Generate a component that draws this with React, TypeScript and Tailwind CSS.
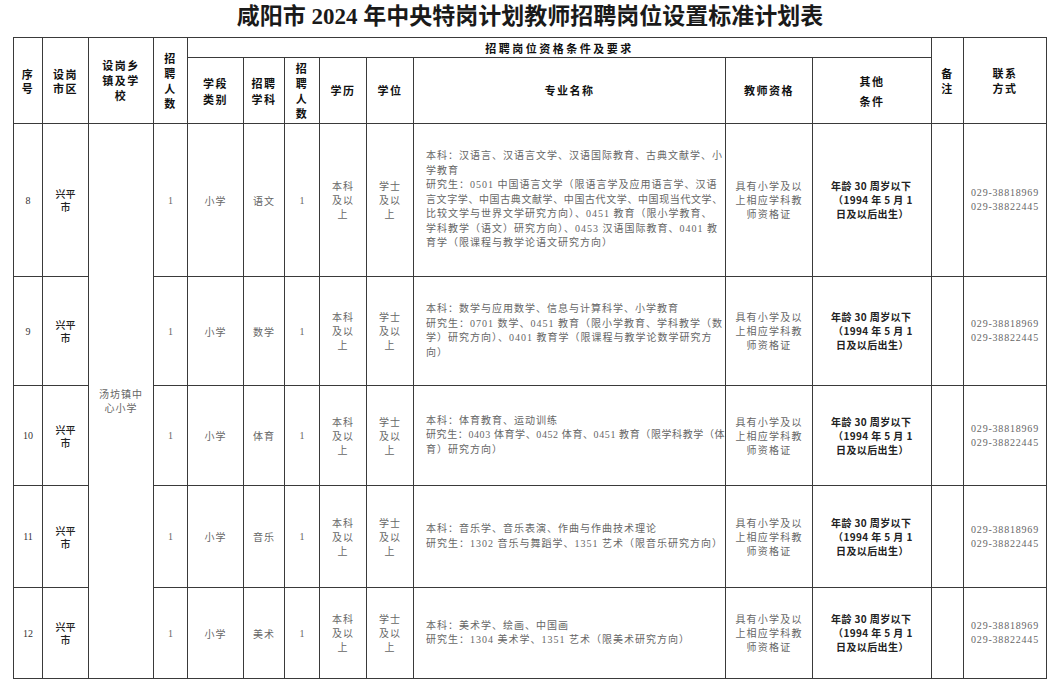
import React from 'react';

const cols = [29, 46, 65, 34, 56, 41, 35, 47, 47, 312, 87, 119, 32, 83];

type Row = {
  no: string;
  subject: string;
  height: number;
  major: { text: string; tight?: boolean }[];
};

const rows: Row[] = [
  {
    no: '8',
    subject: '语文',
    height: 153,
    major: [
      { text: '本科：汉语言、汉语言文学、汉语国际教育、古典文献学、小' },
      { text: '学教育' },
      { text: '研究生：0501 中国语言文学（限语言学及应用语言学、汉语' },
      { text: '言文字学、中国古典文献学、中国古代文学、中国现当代文学、', tight: true },
      { text: '比较文学与世界文学研究方向）、0451 教育（限小学教育、' },
      { text: '学科教学（语文）研究方向）、0453 汉语国际教育、0401 教' },
      { text: '育学（限课程与教学论语文研究方向）' },
    ],
  },
  {
    no: '9',
    subject: '数学',
    height: 109,
    major: [
      { text: '本科：数学与应用数学、信息与计算科学、小学教育' },
      { text: '研究生：0701 数学、0451 教育（限小学教育、学科教学（数' },
      { text: '学）研究方向）、0401 教育学（限课程与教学论数学研究方' },
      { text: '向）' },
    ],
  },
  {
    no: '10',
    subject: '体育',
    height: 100,
    major: [
      { text: '本科：体育教育、运动训练' },
      { text: '研究生：0403 体育学、0452 体育、0451 教育（限学科教学（体', tight: true },
      { text: '育）研究方向）' },
    ],
  },
  {
    no: '11',
    subject: '音乐',
    height: 102,
    major: [
      { text: '本科：音乐学、音乐表演、作曲与作曲技术理论' },
      { text: '研究生：1302 音乐与舞蹈学、1351 艺术（限音乐研究方向）' },
    ],
  },
  {
    no: '12',
    subject: '美术',
    height: 91,
    major: [
      { text: '本科：美术学、绘画、中国画' },
      { text: '研究生：1304 美术学、1351 艺术（限美术研究方向）' },
    ],
  },
];

const serif = { fontFamily: '"Liberation Serif", "Noto Sans CJK SC", serif' };

function Stack({ lines, className = '' }: { lines: string[]; className?: string }) {
  return (
    <div className={className}>
      {lines.map((l, i) => (
        <div key={i}>{l}</div>
      ))}
    </div>
  );
}

const cell = 'border border-[#3a3a3a] p-0 text-center align-middle';
const head = `${cell} text-[11px] font-bold text-[#111] tracking-[1.5px]`;

export default function App() {
  return (
    <div className="h-[689px] w-[1060px] bg-white" style={{ fontFamily: '"Noto Sans CJK SC", sans-serif' }}>
      <div
        className="flex h-[37px] items-center justify-center pb-[2px] text-[23px] font-semibold text-[#1a1a1a]"
        style={serif}
      >
        咸阳市 2024 年中央特岗计划教师招聘岗位设置标准计划表
      </div>

      <table className="ml-[13px] w-[1033px] table-fixed border-collapse">
        <colgroup>
          {cols.map((w, i) => (
            <col key={i} style={{ width: w }} />
          ))}
        </colgroup>
        <thead>
          <tr className="h-[20px]">
            <th rowSpan={2} className={`${head} leading-[14px]`}>
              <Stack lines={['序', '号']} />
            </th>
            <th rowSpan={2} className={`${head} leading-[14px]`}>
              <Stack lines={['设岗', '市区']} />
            </th>
            <th rowSpan={2} className={`${head} leading-[15px]`}>
              <Stack lines={['设岗乡', '镇及学', '校']} />
            </th>
            <th rowSpan={2} className={`${head} leading-[15px]`}>
              <Stack lines={['招', '聘', '人', '数']} />
            </th>
            <th colSpan={8} className={`${head} leading-[14px] tracking-[2.5px]`}>
              招聘岗位资格条件及要求
            </th>
            <th rowSpan={2} className={`${head} leading-[15px]`}>
              <Stack lines={['备', '注']} />
            </th>
            <th rowSpan={2} className={`${head} leading-[15px]`}>
              <Stack lines={['联系', '方式']} />
            </th>
          </tr>
          <tr className="h-[66px]">
            <th className={`${head} leading-[16px]`}>
              <Stack lines={['学段', '类别']} />
            </th>
            <th className={`${head} leading-[16px]`}>
              <Stack lines={['招聘', '学科']} />
            </th>
            <th className={`${head} leading-[15px]`}>
              <Stack lines={['招', '聘', '人', '数']} />
            </th>
            <th className={head}>学历</th>
            <th className={head}>学位</th>
            <th className={head}>专业名称</th>
            <th className={head}>教师资格</th>
            <th className={`${head} leading-[20px]`}>
              <Stack lines={['其他', '条件']} />
            </th>
          </tr>
        </thead>
        <tbody className="text-[10px] text-[#666]">
          {rows.map((r, idx) => (
            <tr key={r.no} style={{ height: r.height }}>
              <td className={`${cell} text-[#333]`} style={serif}>
                {r.no}
              </td>
              <td className={`${cell} font-medium leading-[13px] text-[#222]`}>
                <Stack lines={['兴平', '市']} />
              </td>
              {idx === 0 && (
                <td rowSpan={5} className={`${cell} leading-[14px] tracking-[1px]`}>
                  <Stack lines={['汤坊镇中', '心小学']} />
                </td>
              )}
              <td className={cell} style={serif}>
                1
              </td>
              <td className={`${cell} tracking-[1px]`}>小学</td>
              <td className={`${cell} tracking-[1px]`}>{r.subject}</td>
              <td className={cell} style={serif}>
                1
              </td>
              <td className={`${cell} leading-[14px] tracking-[1px]`}>
                <Stack lines={['本科', '及以', '上']} />
              </td>
              <td className={`${cell} leading-[14px] tracking-[1px]`}>
                <Stack lines={['学士', '及以', '上']} />
              </td>
              <td className={`${cell} pl-[12px] text-left leading-[14.5px]`} style={serif}>
                {r.major.map((m, i) => (
                  <div
                    key={i}
                    className={`whitespace-nowrap ${m.tight ? 'tracking-[0.6px]' : 'tracking-[1px]'}`}
                  >
                    {m.text}
                  </div>
                ))}
              </td>
              <td className={`${cell} leading-[14px] tracking-[1.2px]`}>
                <Stack lines={['具有小学及以', '上相应学科教', '师资格证']} />
              </td>
              <td
                className={`${cell} whitespace-pre pl-[18px] text-left font-semibold leading-[14px] tracking-[0.4px] text-[#222]`}
              >
                <div>年龄 30 周岁以下</div>
                <div className="pl-[2px]">（1994 年 5 月 1</div>
                <div className="pl-[5px]">日及以后出生）</div>
              </td>
              <td className={cell}></td>
              <td className={`${cell} leading-[14px] tracking-[0.8px]`} style={serif}>
                <div>029-38818969</div>
                <div>029-38822445</div>
              </td>
            </tr>
          ))}
        </tbody>
      </table>
    </div>
  );
}
